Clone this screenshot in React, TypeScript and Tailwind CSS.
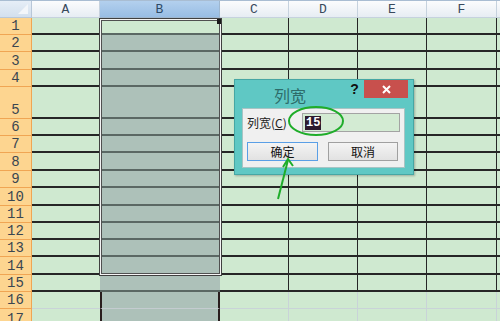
import React from 'react';

const cols = [
  { key: 'A', w: 'w-[68px]' },
  { key: 'B', w: 'w-[120px]' },
  { key: 'C', w: 'w-[69px]' },
  { key: 'D', w: 'w-[69px]' },
  { key: 'E', w: 'w-[69px]' },
  { key: 'F', w: 'w-[70px]' },
];

// row heights 1..17, read off the screenshot
const rowHeights = [
  'h-[17px]', 'h-[17px]', 'h-[18px]', 'h-[17px]', 'h-[32px]', 'h-[17px]', 'h-[17px]', 'h-[18px]', 'h-[17px]',
  'h-[18px]', 'h-[17px]', 'h-[17px]', 'h-[17px]', 'h-[18px]', 'h-[17px]', 'h-[17px]', 'h-[40px]',
];

const cellClass = (col: string, row: number) => {
  const framed = row <= 15;
  if (col === 'B') {
    if (!framed) return 'bg-[#adc1b9] border-x-2 border-x-[#2a1e1e] border-b border-b-[#c4ccd0]';
    if (row === 1) return 'bg-[#cfe9d0] border-b-2 border-[#5b6864]';
    return 'bg-[#adc1b9] border-b-2 border-[#5b6864]';
  }
  if (col === 'A') {
    return framed ? 'bg-[#cfe9d0] border-b-2 border-[#262626]' : 'bg-[#cfe9d0] border-b border-[#c9d3d8]';
  }
  return framed
    ? 'bg-[#cfe9d0] border-b-2 border-r border-[#262626]'
    : 'bg-[#cfe9d0] border-b border-r border-[#c9d3d8]';
};

const Sheet = () => (
  <div className="flex flex-col">
    {/* column headers */}
    <div className="flex h-[18px] border-t border-[#a9bdd2]">
      <div className="relative w-[32px] bg-gradient-to-b from-[#e6eef7] to-[#d3e0ee] border-r border-b border-[#b8c7d8]">
        <div className="absolute right-[3px] bottom-[3px] w-0 h-0 border-l-[10px] border-l-transparent border-b-[10px] border-b-[#f3f6fa]" />
      </div>
      {cols.map((c) => (
        <div
          key={c.key}
          className={`${c.w} flex items-center justify-center border-r border-b text-[13px] leading-none ${
            c.key === 'B'
              ? 'bg-gradient-to-b from-[#b3d0ee] to-[#98bde4] border-[#9fb7cf] text-[#2e4a66]'
              : 'bg-gradient-to-b from-[#fbfcfd] to-[#e7edf3] border-[#c6d2de] text-[#38495c]'
          }`}
          style={{ fontFamily: '"Liberation Mono", monospace' }}
        >
          {c.key}
        </div>
      ))}
      <div className="flex-1 bg-gradient-to-b from-[#fbfcfd] to-[#e7edf3] border-b border-[#c6d2de]" />
    </div>

    {rowHeights.map((hc, i) => {
      const row = i + 1;
      return (
        <div key={row} className={`flex ${hc}`}>
          <div
            className={`w-[32px] flex justify-center bg-[#fdd590] border-r border-b border-[#f0a553] text-[14px] leading-[16px] text-[#3a4650] ${
              row === 17 ? 'items-start pt-[2px]' : 'items-end'
            }`}
            style={{ fontFamily: '"Liberation Mono", monospace' }}
          >
            {row}
          </div>
          {cols.map((c) => (
            <div key={c.key} className={`${c.w} ${cellClass(c.key, row)}`} />
          ))}
          <div className={`flex-1 ${row <= 15 ? 'bg-[#cfe9d0] border-b-2 border-[#262626]' : 'bg-[#cfe9d0] border-b border-[#c9d3d8]'}`} />
        </div>
      );
    })}
  </div>
);

const Dialog = () => (
  <div className="absolute left-[234px] top-[79px] w-[180px] h-[96px] bg-[#5fc8c4] border border-[#46a7a4] shadow-[1px_1px_2px_rgba(0,0,0,0.25)]">
    <div className="flex h-[28px] items-start">
      <div className="w-[110px] pt-[6px] text-center text-[16px] leading-[18px] text-[#2d6c6a]">列宽</div>
      <div className="w-[19px] pt-[2px] text-center text-[14px] font-bold leading-[15px] text-[#111]" style={{ fontFamily: '"Liberation Sans", sans-serif' }}>?</div>
      <div className="w-[44px] h-[18px] bg-[#c8504d] flex items-center justify-center">
        <svg width="9" height="9" viewBox="0 0 9 9">
          <path d="M1 1 L8 8 M8 1 L1 8" stroke="#fff" strokeWidth="2" />
        </svg>
      </div>
    </div>
    <div className="ml-[7px] w-[163px] h-[60px] bg-[#f0f0f0] border border-[#a8c4c4] px-[4px] pt-[4px]">
      <div className="flex items-center h-[19px]">
        <div className="w-[55px] text-[12px] leading-none text-[#222]">
          列宽(<span className="underline">C</span>)
        </div>
        <div className="w-[98px] h-[19px] bg-[#d3ebd3] border border-[#a3a3a3] flex items-center pl-[2px]">
          <span className="bg-[#2e1b2e] text-white text-[12px] leading-[14px] px-[1px] font-bold" style={{ fontFamily: '"Liberation Mono", monospace' }}>
            15
          </span>
        </div>
      </div>
      <div className="flex gap-[10px] mt-[10px]">
        <div className="w-[71px] h-[19px] flex items-center justify-center border border-[#5a9fe6] bg-gradient-to-b from-[#f4f4f4] to-[#e2e2e2] text-[12px] leading-none text-[#111]">
          确定
        </div>
        <div className="w-[70px] h-[19px] flex items-center justify-center border border-[#a0a0a0] bg-gradient-to-b from-[#f4f4f4] to-[#e2e2e2] text-[12px] leading-none text-[#111]">
          取消
        </div>
      </div>
    </div>
  </div>
);

export default function App() {
  return (
    <div
      className="relative w-[500px] h-[321px] overflow-hidden bg-[#cfe9d0]"
      style={{ fontFamily: '"Noto Sans CJK SC", "Noto Sans", sans-serif' }}
    >
      <Sheet />

      {/* copy marquee around column B */}
      <div className="pointer-events-none absolute left-[99px] top-[18px] w-[123px] h-[258px] border border-[#404040]">
        <div className="h-full w-full border border-[#f4f4f4]">
          <div className="h-full w-full border border-[#505050]" />
        </div>
      </div>
      <div className="absolute left-[217px] top-[19px] w-[4px] h-[5px] bg-[#1a1a1a]" />

      <Dialog />

      {/* green annotations */}
      <svg className="pointer-events-none absolute left-0 top-0" width="500" height="321">
        <ellipse cx="316" cy="121" rx="27" ry="14" fill="none" stroke="#1fad2a" strokeWidth="2" />
        <path d="M278 199 L288 160" stroke="#1fad2a" strokeWidth="2" fill="none" />
        <path d="M283 167 L288 159 L293 166" stroke="#1fad2a" strokeWidth="2" fill="none" />
      </svg>
    </div>
  );
}
